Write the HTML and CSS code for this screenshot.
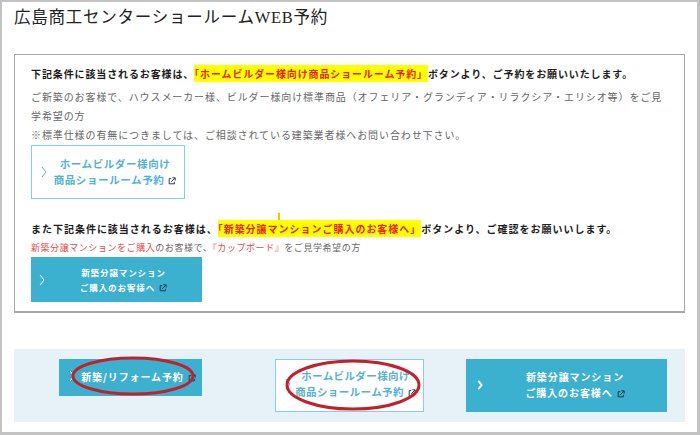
FILE: index.html
```html
<!DOCTYPE html>
<html lang="ja">
<head>
<meta charset="utf-8">
<title>広島商工センターショールームWEB予約</title>
<link rel="stylesheet" href="styles.css">
</head>
<body>
<svg width="0" height="0" class="defs"><defs>
<symbol id="ext" viewBox="0 0 10 10"><path d="M4 2H1.5V8.5H8V6" fill="none" stroke="currentColor" stroke-width="1.2"/><path d="M4 6L8.5 1.5M5.5 1H9V4.5" fill="none" stroke="currentColor" stroke-width="1.2"/></symbol>
<symbol id="chev" viewBox="0 0 6 12"><path d="M1 1L5 6L1 11" fill="none" stroke="currentColor"/></symbol>
</defs></svg>
<main class="window">
  <h1 class="title">広島商工センターショールームWEB予約</h1>
  <section class="box">
    <p class="lead">下記条件に該当されるお客様は、<mark class="hl">「ホームビルダー様向け商品ショールーム予約」</mark>ボタンより、ご予約をお願いいたします。</p>
    <p class="note">ご新築のお客様で、ハウスメーカー様、ビルダー様向け標準商品（オフェリア・グランディア・リラクシア・エリシオ等）をご見学希望の方<br>※標準仕様の有無につきましては、ご相談されている建築業者様へお問い合わせ下さい。</p>
    <a class="btn outline top-btn"><svg class="chev"><use href="#chev"/></svg><span>ホームビルダー様向け<br>商品ショールーム予約<svg class="ext dark"><use href="#ext"/></svg></span></a>
    <div class="second">
      <i class="tick"></i>
      <p class="lead lead2">また下記条件に該当されるお客様は、<mark class="hl">「新築分譲マンションご購入のお客様へ」</mark>ボタンより、ご確認をお願いいします。</p>
      <p class="note note2"><span class="red">新築分譲マンションをご購入</span>のお客様で、<span class="red">『カップボード』</span>をご見学希望の方</p>
      <a class="btn solid mid-btn"><svg class="chev"><use href="#chev"/></svg><span>新築分譲マンション<br>ご購入のお客様へ<svg class="ext dark"><use href="#ext"/></svg></span></a>
    </div>
  </section>
  <section class="band">
    <div class="cell cell1"><a class="btn solid b1"><svg class="chev"><use href="#chev"/></svg><span>新築/リフォーム予約<svg class="ext dark"><use href="#ext"/></svg></span></a>
      <svg class="ring ring1" viewBox="0 0 124 40"><ellipse cx="62" cy="20" rx="60" ry="18"/></svg></div>
    <div class="cell cell2"><a class="btn outline b2"><svg class="chev"><use href="#chev"/></svg><span>ホームビルダー様向け<br>商品ショールーム予約<svg class="ext dark"><use href="#ext"/></svg></span></a>
      <svg class="ring ring2" viewBox="0 0 136 52"><ellipse cx="68" cy="26" rx="66" ry="24"/></svg></div>
    <div class="cell cell3"><a class="btn solid b3"><svg class="chev bold"><use href="#chev"/></svg><span>新築分譲マンション<br>ご購入のお客様へ<svg class="ext dark"><use href="#ext"/></svg></span></a></div>
  </section>
</main>
</body>
</html>
```
FILE: styles.css
```css
* { box-sizing: border-box; }
html, body { margin: 0; padding: 0; }
body {
  width: 700px; height: 435px; overflow: hidden;
  background: #c3c3c3;
  padding: 2px 3px 3px 2px;
  font-family: "Noto Sans CJK JP", "Noto Sans", sans-serif;
}
.defs { position: absolute; }
.window { background: #fff; width: 695px; height: 430px; padding: 0 12px; }
.title {
  margin: 0; padding-top: 3px; height: 52px;
  font-family: "Liberation Serif", "Noto Sans CJK JP", serif;
  font-size: 16.5px; line-height: 26px; font-weight: 400;
  letter-spacing: 0.75px; color: #222;
}
.box {
  width: 671px; height: 259px;
  border: 1px solid #a9a9a9; border-bottom-width: 2px;
  padding: 11px 16px 0;
}
.lead {
  margin: 0; font-size: 10px; line-height: 16px; font-weight: 700;
  letter-spacing: 0.88px; color: #1c1c1c; white-space: nowrap;
}
.hl { background: #ffff00; color: #f02000; padding: 1px 0; }
.note {
  margin: 5px 0 0; font-size: 10px; line-height: 19px; color: #666;
  letter-spacing: 0.9px;
}
.btn { display: flex; align-items: center; text-align: center; font-weight: 700; text-decoration: none; position: relative; }
.btn span { flex: 1; }
.chev { width: 6px; height: 12px; flex: none; stroke-width: 1; }
.chev.bold { width: 6px; height: 10px; stroke-width: 2.2; }
.ext { width: 8px; height: 8px; margin-left: 4px; vertical-align: -1px; }
.ext.dark { color: #223344; }
.outline { border: 1px solid #84cfe4; background: #fff; color: #4fb4d0; }
.solid { background: #3bb1cf; color: #fff; }
.top-btn {
  width: 154px; height: 54px; margin-top: 1px; padding: 0 1px 0 9px;
  border-width: 1.5px; font-size: 10.5px; line-height: 16.5px; letter-spacing: 0.6px;
}
.second { position: relative; padding-top: 22px; }
.tick { position: absolute; left: 247px; top: 14px; width: 2px; height: 7px; background: #f5c400; }
.lead2 { letter-spacing: 0.98px; }
.note2 { margin: 2px 0 0; font-size: 9px; line-height: 17px; letter-spacing: 0.56px; }
.red { color: #e8484c; }
.mid-btn {
  width: 171px; height: 45px; margin-top: 1px; padding: 0 0 0 8px;
  font-size: 8.5px; line-height: 14.5px; letter-spacing: 0.9px;
}
.band {
  display: flex; align-items: flex-start;
  width: 671px; height: 73px; margin-top: 36px;
  background: #e6f2f8; padding: 10px 0 0;
}
.cell { position: relative; flex: none; }
.cell1 { margin-left: 45px; width: 143px; }
.cell2 { margin-left: 73px; width: 149px; }
.cell3 { margin-left: 42px; width: 201px; }
.b1 { height: 37px; padding: 0 0 3px 10px; font-size: 10px; letter-spacing: 0.9px; white-space: nowrap; }
.b2 { height: 53px; padding: 0 3px 4px 9px; font-size: 10.5px; line-height: 15.5px; letter-spacing: 0.4px; color: #55b3cf; white-space: nowrap; }
.b3 { height: 53px; padding: 0 0 2px 11px; font-size: 10px; line-height: 16px; letter-spacing: 0.9px; }
.ring { position: absolute; overflow: visible; fill: none; stroke: #c4202c; stroke-width: 3px; }
.ring1 { left: 12px; top: -3px; width: 124px; height: 40px; }
.ring2 { left: 10px; top: 0; width: 136px; height: 52px; }
```
